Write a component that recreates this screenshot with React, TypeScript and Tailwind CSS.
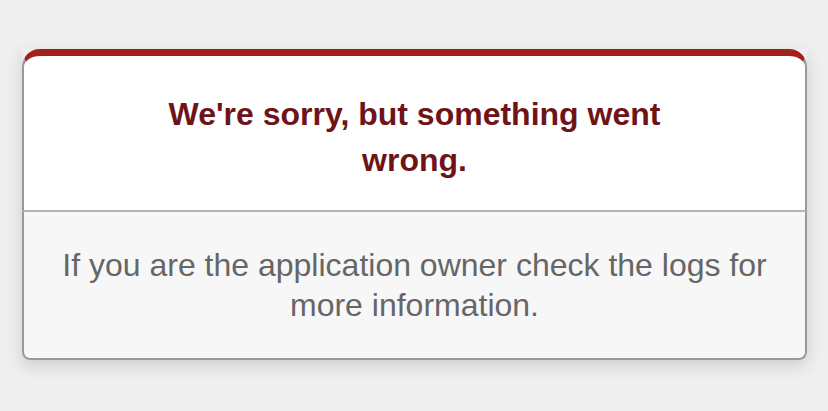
export default function App() {
  return (
    <div className="min-h-[411px] w-full bg-[#efefef] pt-[49px] text-center" style={{ fontFamily: '"Liberation Sans", Arial, sans-serif' }}>
      <div className="ml-[22px] w-[785px] rounded-b-[8px] shadow-[0_6px_15px_rgba(50,50,50,0.17)]">
        <div className="rounded-t-[18px] border-x-2 border-t-[7px] border-b-2 border-x-[#999] border-t-[#a4201a] border-b-[#b4b4b4] bg-white px-[110px] pt-[35px] pb-[27px]">
          <h1 className="text-[32px] font-bold leading-[46px] text-[#6e1418]">
            We're sorry, but something went wrong.
          </h1>
        </div>
        <div className="rounded-b-[8px] border-x-2 border-b-2 border-[#999] bg-[#f7f7f7] px-[30px] pt-[33px] pb-[33px]">
          <p className="text-[32px] leading-[40px] text-[#666]">
            If you are the application owner check the logs for more information.
          </p>
        </div>
      </div>
    </div>
  );
}
